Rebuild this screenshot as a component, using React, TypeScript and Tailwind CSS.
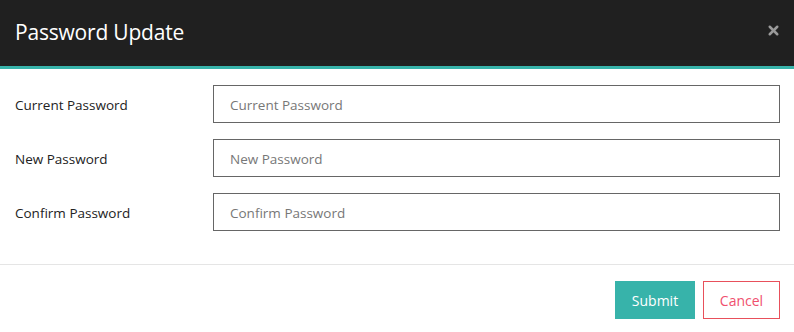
import { X } from "lucide-react";

const fields = ["Current Password", "New Password", "Confirm Password"];

export default function App() {
  return (
    <div className="w-[794px] h-[332px] bg-white font-['Open_Sans',sans-serif] overflow-hidden">
      <div className="h-[69px] bg-[#202020] border-b-[3px] border-[#37b3aa] flex items-center justify-between pl-[15px] pr-[13px]">
        <h1 className="text-[21px] leading-none text-white tracking-[-0.2px] pb-[1px]">Password Update</h1>
        <button className="text-[#9a9a9a] -mt-[5px]">
          <X className="h-[15px] w-[15px]" strokeWidth={4} />
        </button>
      </div>

      <div className="pl-[15px] pr-[14px] pt-[16px] pb-[33px] flex flex-col gap-[16px]">
        {fields.map((f) => (
          <div key={f} className="flex items-center">
            <label className="w-[198px] text-[13.5px] text-[#222] pt-[2px]">{f}</label>
            <input
              type="password"
              placeholder={f}
              className="flex-1 h-[38px] border border-[#666] px-[16px] pt-[2px] text-[13.5px] text-[#333] placeholder:text-[#777] outline-none"
            />
          </div>
        ))}
      </div>

      <div className="border-t border-[#e5e5e5] pt-[16px] pr-[14px] flex justify-end gap-[8px]">
        <button className="w-[80px] h-[38px] bg-[#37b3aa] text-white text-[14px]">Submit</button>
        <button className="w-[77px] h-[38px] border border-[#e8505b] text-[#f0506e] text-[14px]">Cancel</button>
      </div>
    </div>
  );
}
